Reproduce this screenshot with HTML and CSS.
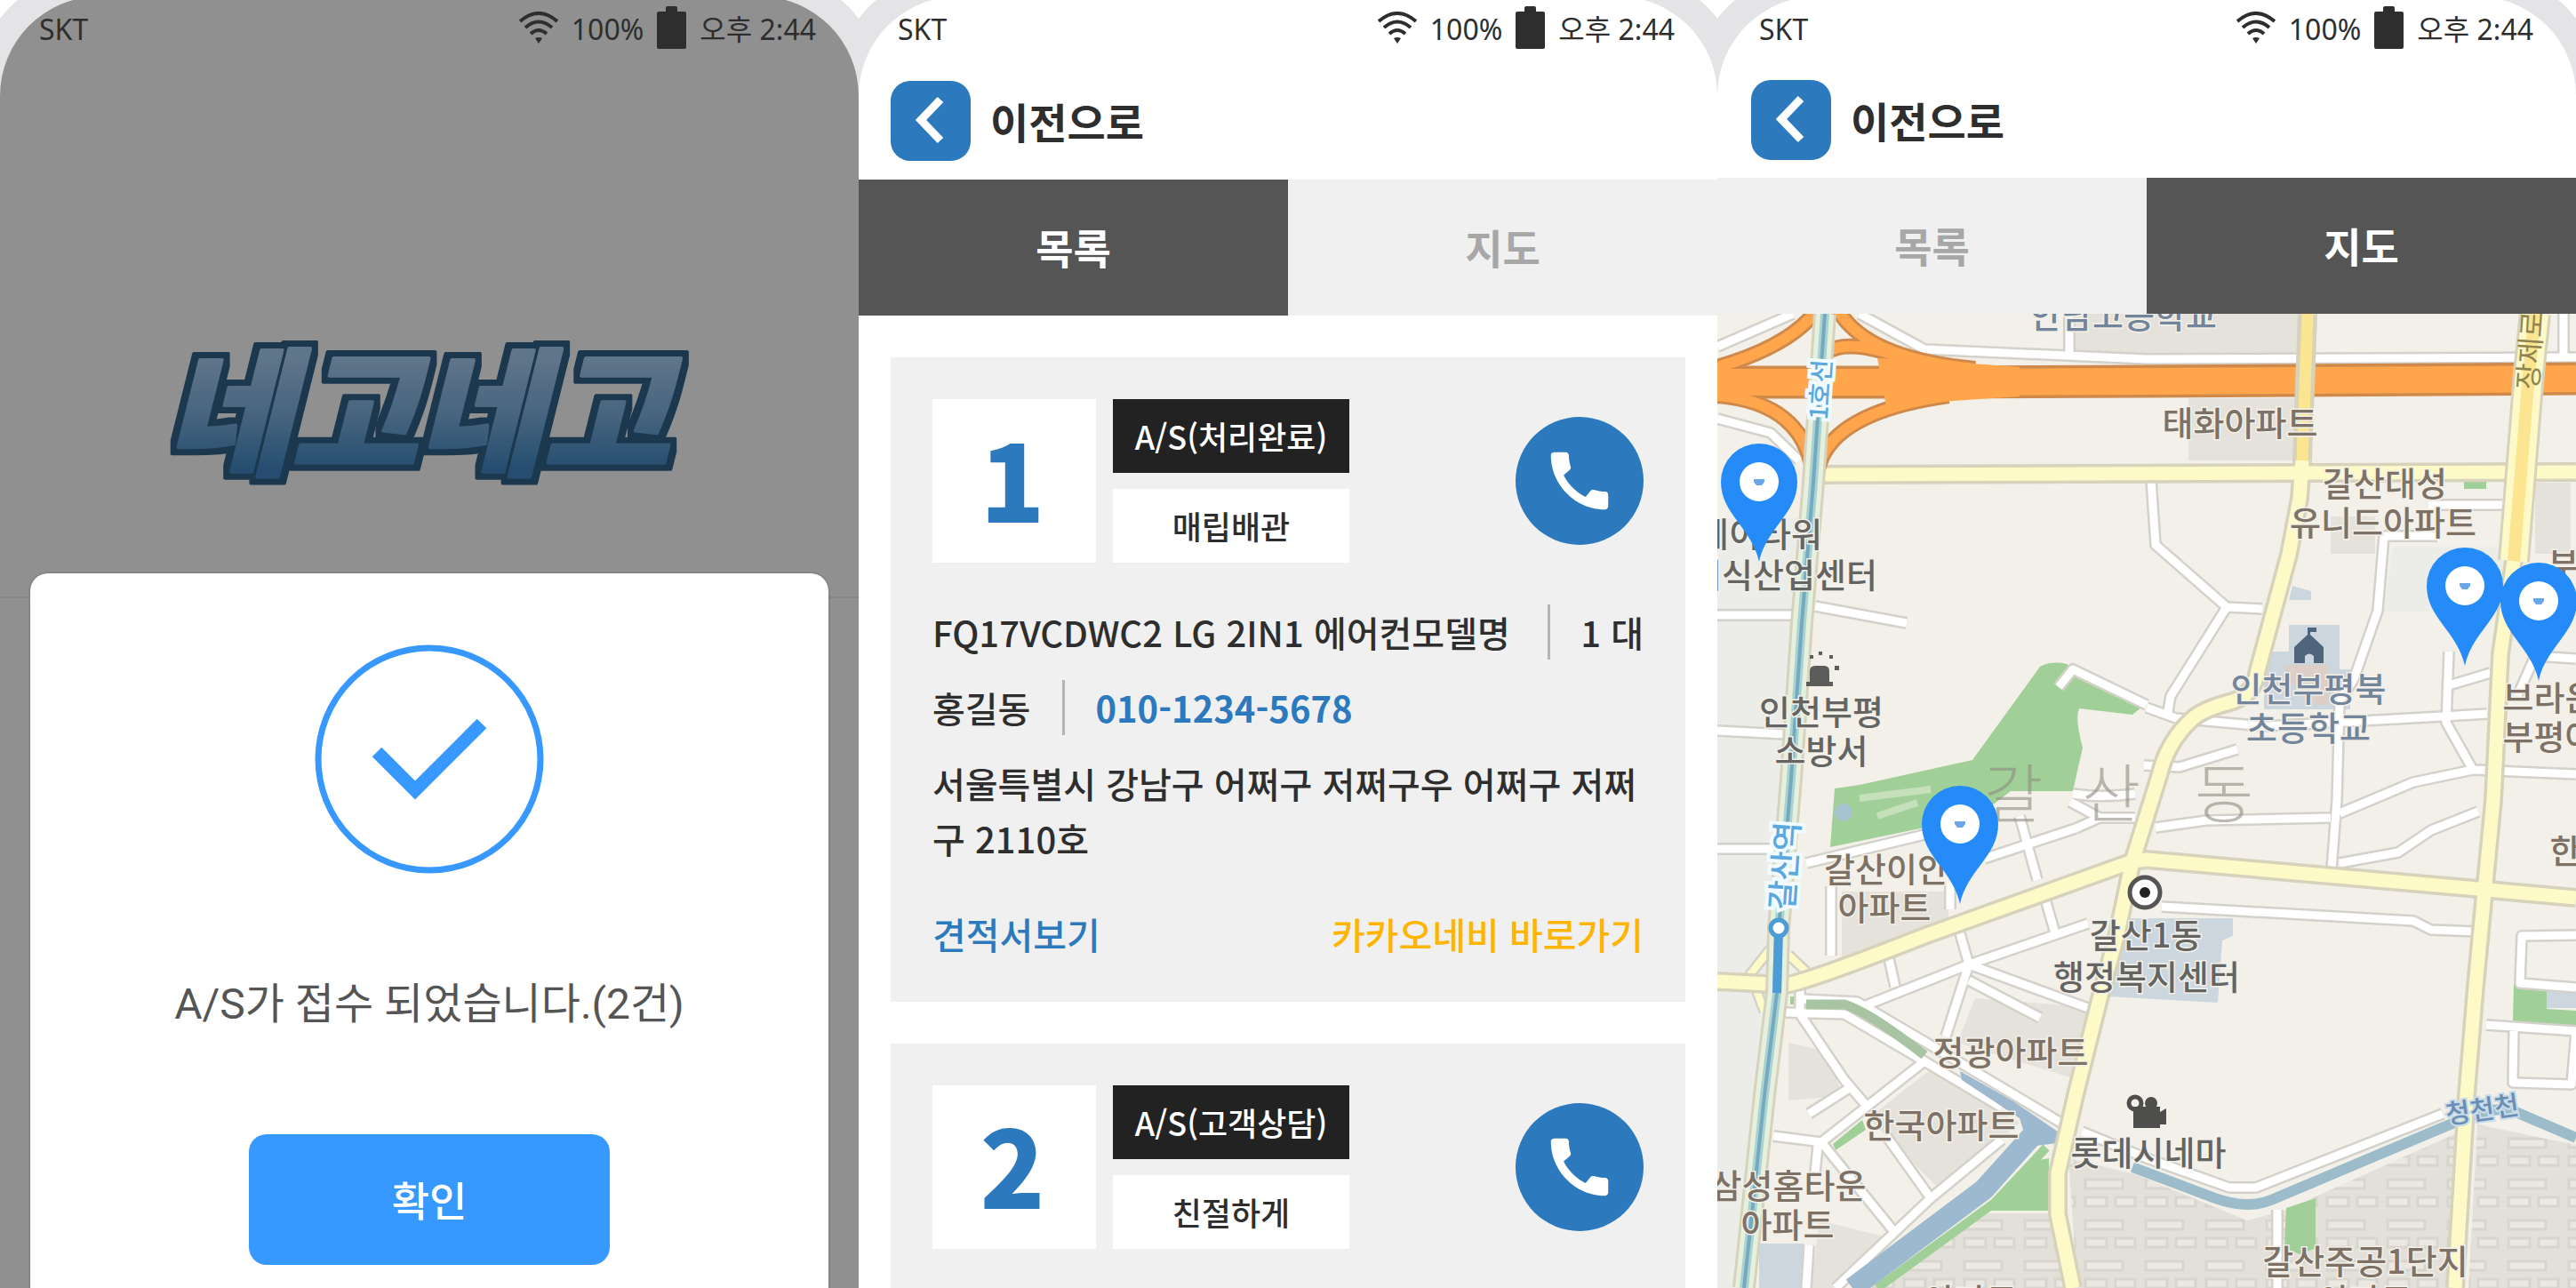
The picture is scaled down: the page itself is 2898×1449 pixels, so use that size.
FILE: index.html
```html
<!DOCTYPE html>
<html lang="ko">
<head>
  <meta charset="UTF-8">
  <meta name="viewport" content="width=device-width, initial-scale=1.0">
  <title>네고네고</title>
  <link rel="stylesheet" href="styles.css">
</head>
<body>

<!-- shared icons -->
<svg class="defs" width="0" height="0" aria-hidden="true">
  <symbol id="wifi" viewBox="0 0 44 36">
    <g fill="none" stroke="currentColor" stroke-width="4">
      <path d="M1 11Q22 -7 43 11"/>
      <path d="M7 18Q22 5 37 18"/>
      <path d="M13 25Q22 17 31 25"/>
    </g>
    <path d="M18 30q4-2 8 0l-4 6z" fill="currentColor"/>
  </symbol>
  <symbol id="battery" viewBox="0 0 33 48">
    <path d="M12 0h9q2 0 2 2v4h8q2 0 2 2v38q0 2-2 2H2q-2 0-2-2V8q0-2 2-2h8V2q0-2 2-2z" fill="currentColor"/>
  </symbol>
  <symbol id="back" viewBox="0 0 90 90">
    <path d="M56 21L34 44L56 67" fill="none" stroke="#fff" stroke-width="9"/>
  </symbol>
  <symbol id="call" viewBox="0 0 24 24">
    <path fill="#fff" d="M20.01 15.38c-1.23 0-2.42-.2-3.53-.56-.35-.12-.74-.03-1.01.24l-1.57 1.97c-2.83-1.35-5.48-3.9-6.89-6.83l1.95-1.66c.27-.28.35-.67.24-1.02-.37-1.11-.56-2.3-.56-3.53 0-.54-.45-.99-.99-.99H4.19C3.65 3 3 3.24 3 3.99 3 13.28 10.73 21 20.01 21c.71 0 .99-.63.99-1.18v-3.45c0-.54-.45-.99-.99-.99z"/>
  </symbol>
</svg>

<main class="phones">

  <!-- 접수 완료 -->
  <section class="phone">
    <div class="screen dim">
      <div class="status">
        <span>SKT</span>
        <div class="status-right">
          <svg class="wifi"><use href="#wifi"/></svg>
          <span>100%</span>
          <svg class="battery"><use href="#battery"/></svg>
          <span>오후 2:44</span>
        </div>
      </div>
      <div class="splash">
        <svg class="logo" viewBox="0 0 640 200" role="img" aria-label="네고네고">
          <defs>
            <linearGradient id="logo-fill" gradientUnits="userSpaceOnUse" x1="0" y1="25" x2="0" y2="175">
              <stop offset="0.1" stop-color="#5f7489"/>
              <stop offset="0.5" stop-color="#47657f"/>
              <stop offset="0.9" stop-color="#264e70"/>
            </linearGradient>
            <filter id="logo-edge" x="-5%" y="-15%" width="110%" height="130%">
              <feMorphology in="SourceAlpha" operator="dilate" radius="7" result="edge"/>
              <feFlood flood-color="#1f3850"/>
              <feComposite in2="edge" operator="in"/>
              <feMerge><feMergeNode/><feMergeNode in="SourceGraphic"/></feMerge>
            </filter>
          </defs>
          <text x="306" y="156" text-anchor="middle" filter="url(#logo-edge)">네고네고</text>
        </svg>
      </div>
      <div class="modal" role="dialog" aria-labelledby="done-msg">
        <svg class="check" viewBox="0 0 258 258" aria-hidden="true">
          <circle cx="129" cy="129" r="125"/>
          <path d="M70 121L113 164L188 89"/>
        </svg>
        <p id="done-msg">A/S가 접수 되었습니다.(2건)</p>
        <button type="button" class="confirm">확인</button>
      </div>
    </div>
  </section>

  <!-- 목록 -->
  <section class="phone">
    <div class="screen">
      <div class="status">
        <span>SKT</span>
        <div class="status-right">
          <svg class="wifi"><use href="#wifi"/></svg>
          <span>100%</span>
          <svg class="battery"><use href="#battery"/></svg>
          <span>오후 2:44</span>
        </div>
      </div>
      <header class="header">
        <button type="button" class="back" aria-label="뒤로"><svg><use href="#back"/></svg></button>
        <h1>이전으로</h1>
      </header>
      <nav class="tabs">
        <button type="button" class="tab active">목록</button>
        <button type="button" class="tab">지도</button>
      </nav>
      <div class="list">
        <article class="card">
          <div class="card-top">
            <div class="num">1</div>
            <div class="tags">
              <span class="tag dark">A/S(처리완료)</span>
              <span class="tag">매립배관</span>
            </div>
            <a class="call" href="tel:010-1234-5678" aria-label="전화"><svg><use href="#call"/></svg></a>
          </div>
          <div class="info">
            <div class="row between">
              <span>FQ17VCDWC2 LG 2IN1 에어컨모델명</span>
              <span class="split">1 대</span>
            </div>
            <div class="row">
              <span>홍길동</span>
              <a class="split tel" href="tel:010-1234-5678">010-1234-5678</a>
            </div>
            <p>서울특별시 강남구 어쩌구 저쩌구우 어쩌구 저쩌구 2110호</p>
          </div>
          <div class="links">
            <a class="blue" href="#estimate">견적서보기</a>
            <a class="yellow" href="#navi">카카오네비 바로가기</a>
          </div>
        </article>
        <article class="card">
          <div class="card-top">
            <div class="num">2</div>
            <div class="tags">
              <span class="tag dark">A/S(고객상담)</span>
              <span class="tag">친절하게</span>
            </div>
            <a class="call" href="tel:010-1234-5678" aria-label="전화"><svg><use href="#call"/></svg></a>
          </div>
        </article>
      </div>
    </div>
  </section>

  <!-- 지도 -->
  <section class="phone map-phone">
    <div class="screen">
      <div class="status">
        <span>SKT</span>
        <div class="status-right">
          <svg class="wifi"><use href="#wifi"/></svg>
          <span>100%</span>
          <svg class="battery"><use href="#battery"/></svg>
          <span>오후 2:44</span>
        </div>
      </div>
      <header class="header">
        <button type="button" class="back" aria-label="뒤로"><svg><use href="#back"/></svg></button>
        <h1>이전으로</h1>
      </header>
      <nav class="tabs">
        <button type="button" class="tab">목록</button>
        <button type="button" class="tab active">지도</button>
      </nav>
      <svg class="map" viewBox="0 0 966 1096" role="img" aria-label="갈산동 지도">
        <defs>
          <pattern id="houses" width="68" height="46" patternUnits="userSpaceOnUse">
            <rect width="68" height="46" fill="#e3e0d9"/>
            <path d="M6 8h42v10h-42zM6 28h24v10h-24zM40 28h22v10h-22z" fill="#ebe8e1" stroke="#d8d5ce" stroke-width="3"/>
          </pattern>
          <g id="pin">
            <path d="M0 90C-8 52 -43 36 -43 0A43 43 0 0 1 43 0C43 36 8 52 0 90z" fill="#248bf9"/>
            <circle r="22" fill="#fff"/>
            <path d="M-6 -3h12v3l-3 4h-6l-3-4z" fill="#69a7e8"/>
          </g>

          <g id="streets">
            <path d="M0 37L85 0M160 0L233 40L483 51L966 49M0 118L60 134L92 165"/>
            <path d="M0 339H88M110 329L213 348M0 469L77 473M0 602H72"/>
            <path d="M488 186L493 260L573 330L613 332M573 330L510 430L506 453M483 443L516 455L616 464L816 453L866 450"/>
            <path d="M750 250L743 334L716 411L700 436L697 547L691 625M750 250H810M800 215H883"/>
            <path d="M823 380L820 460L850 513L966 518M850 513L783 527L700 562M823 418L870 404"/>
            <path d="M493 578L550 570L690 567M700 618L766 606L803 581L856 560"/>
            <path d="M500 667L783 683L803 693L856 695M480 508L520 510L585 490"/>
            <path d="M966 699L905 700L903 753L966 758M865 800L966 807M896 807L895 865L961 867L966 807"/>
            <path d="M900 430L920 385L966 388M952 0V50M396 0V50"/>
            <path d="M100 618L233 586M128 644V722M300 613L403 579M340 565L360 637M397 549L430 567H470M430 567L403 579"/>
            <path d="M273 697L283 732L257 813M167 778L283 732L417 686M193 725L200 757M370 662L380 697"/>
            <path d="M283 732L417 781M283 750L363 792M262 640L262 670"/>
            <path d="M93 757V788L143 862L167 890M77 786L143 788L233 841L320 893M97 771L157 774L247 827L400 918"/>
            <path d="M233 841L117 932L63 925M103 900L147 872M117 932L200 1034M190 925L240 995M113 936L110 967"/>
            <path d="M320 929L240 995L133 1096M103 1048L100 1096M410 920L483 950L576 983H606L816 900M630 1008V1096"/>
            <path d="M400 540Q430 545 470 540M384 420L400 400L483 440"/>
          </g>
          <g id="avenues">
            <path d="M115 181L966 178"/>
            <path d="M658 165L655 208L643 271L608 401Q604 428 580 436Q545 445 533 457Q506 482 497 520L467 616L450 697L430 771L403 879L383 967V1013L400 1096"/>
            <path d="M0 751L77 755Q100 752 233 700L467 616L483 614L866 648L966 657"/>
            <path d="M896 278L881 383L873 547L863 651L853 757L843 879L830 1096"/>
          </g>
          <g id="ramps">
            <path d="M0 60Q85 35 113 -6M135 -6Q165 50 290 62M122 44Q150 24 230 58"/>
            <path d="M0 92Q98 100 108 182M112 182Q120 112 260 92"/>
          </g>
          <path id="rail" d="M121 0L108 190L95 348L83 523L69 692L67 764L53 879L30 1096"/>
        </defs>

        <rect width="966" height="1096" fill="#f3f0e9"/>
        <path d="M0 230H105L85 380L72 545L60 760L40 950L25 1096H0z" fill="#ecede8"/>

        <!-- blocks -->
        <path d="M395 950L470 968L596 1020L640 1008L840 918L830 1096H405zM855 912L966 935V1096H845zM300 1012H380L395 1096H170z" fill="url(#houses)"/>
        <path d="M395 0H660V45H395zM530 95H650V165H530zM140 650H260V700L140 730zM80 820L125 830L140 880L80 885zM240 850L340 910L250 985L170 905zM290 770L420 780L400 860L270 820z" fill="#e5e2db"/>
        <path d="M690 228H740V270H690zM920 190H960V270H920zM115 1020L195 1040L130 1096H105z" fill="#e5e2db"/>
        <path d="M760 262H885V335H750z" fill="#ecede8"/>
        <path d="M643 350H700V400H712V445H615V380H643zM450 680H580V700L568 705L563 775L440 768zM47 1046H97V1096H47zM647 306L668 312V322H643z" fill="#ccd6df"/>
        <path d="M638 395H688V440H675L640 410z" fill="#dccfc7"/>

        <!-- parks -->
        <path d="M132 534L160 530L287 502L363 397Q375 390 393 394L477 443L467 451L407 444Q402 455 411 488L400 537H330L300 560L233 578L127 600z" fill="#a0d098"/>
        <path d="M160 545L240 535M180 565L225 550" fill="none" stroke="#c5e0ba" stroke-width="8"/>
        <circle cx="142" cy="561" r="10" fill="#a6c3cf"/>
        <path d="M130 934L163 907L167 918L133 941zM300 1009H373V950L357 953zM640 1006L673 995V1051L655 1058L638 1051zM896 753L933 755V782L966 784V802L895 797zM840 184h25v13h-25zM82 768h10v9h-10z" fill="#a0d098"/>
        <path d="M933 758H966V781H933z" fill="#ccd6df"/>

        <use href="#streets" class="case" stroke-width="14"/>
        <use href="#streets" class="line" stroke-width="9"/>

        <!-- water -->
        <path d="M100 777H143Q170 785 233 834" fill="none" stroke="#a9c4a2" stroke-width="11"/>
        <path d="M370 938L312 1000L180 1096" fill="none" stroke="#a0d098" stroke-width="10"/>
        <path d="M353 926L300 985L152 1096" fill="none" stroke="#9db9cf" stroke-width="24"/>
        <path d="M273 852L333 886L383 920V933L350 937L340 905L275 862z" fill="#9db9cf"/>
        <path d="M467 960L560 995Q596 1008 623 997L836 907Q880 888 903 900L966 927" fill="none" stroke="#9cbccb" stroke-width="12"/>

        <!-- main roads -->
        <path d="M60 714L37 743L53 785M80 721L100 740" class="small-avenue case"/>
        <path d="M60 714L37 743L53 785M80 721L100 740" class="small-avenue pale"/>
        <use href="#avenues" class="avenue-case" stroke-width="22"/>
        <use href="#avenues" class="pale" stroke-width="15"/>
        <use href="#ramps" fill="none" stroke="#cf8a4b" stroke-width="18"/>
        <path d="M0 77H230L483 76L966 73" fill="none" stroke="#cf8a4b" stroke-width="37"/>
        <path d="M180 50Q250 53 340 60V93Q260 98 190 104z" fill="#ffa54c"/>
        <use href="#ramps" fill="none" stroke="#ffa54c" stroke-width="12"/>
        <path d="M0 77H230L483 76L966 73" fill="none" stroke="#ffa54c" stroke-width="30"/>
        <path d="M664 0L658 165" class="avenue-case" stroke-width="22"/>
        <path d="M664 0L658 165" fill="none" stroke="#fbe590" stroke-width="13"/>
        <path d="M920 0L913 67L896 278" class="avenue-case" stroke-width="36"/>
        <path d="M920 0L913 67L896 278" class="pale" stroke-width="30"/>
        <path d="M920 0L913 67L896 278" fill="none" stroke="#fbe590" stroke-width="14"/>

        <!-- line 1 -->
        <use href="#rail" fill="none" stroke="#d6d3bc" stroke-width="26"/>
        <use href="#rail" fill="none" stroke="#e6f0dc" stroke-width="20"/>
        <use href="#rail" fill="none" stroke="#a9d3d3" stroke-width="10"/>
        <use href="#rail" fill="none" stroke="#74a9be" stroke-width="4"/>
        <path d="M69 692L67 764" stroke="#4d9cd6" stroke-width="10"/>
        <circle cx="69" cy="691" r="9" fill="#fff" stroke="#4d9cd6" stroke-width="5"/>

        <!-- place marks -->
        <path d="M104 414v-12q0-6 6-6h10q6 0 6 6v12h4v5h-30v-5zM104 384h4v4h-4zM114 380h4v4h-4zM126 384h4v4h-4zM132 396h5v5h-5z" fill="#5c5c5a"/>
        <path d="M649 393v-18l15-14v-8h10v5h-7v3l15 14v18h-11v-8q-5-5-10 0v8z" fill="#4f657b"/>
        <circle cx="481" cy="651" r="17" fill="#fff" stroke="#555" stroke-width="5"/>
        <circle cx="481" cy="651" r="6" fill="#222"/>
        <path d="M468 892h30v6l7-4v18h-7v4h-30z" fill="#4e4e4c"/>
        <circle cx="470" cy="888" r="7" fill="none" stroke="#4e4e4c" stroke-width="5"/>
        <circle cx="488" cy="888" r="7" fill="#4e4e4c"/>

        <!-- labels -->
        <g class="district">
          <text x="333" y="566">갈</text>
          <text x="443" y="566">산</text>
          <text x="570" y="566">동</text>
        </g>
        <g class="label school">
          <text x="457" y="16">안남고등학교</text>
          <text x="665" y="436">인천부평북</text>
          <text x="665" y="480">초등학교</text>
        </g>
        <g class="label home">
          <text x="588" y="137">태화아파트</text>
          <text x="751" y="205">갈산대성</text>
          <text x="749" y="249">유니드아파트</text>
          <text x="190" y="639">갈산이안</text>
          <text x="188" y="682">아파트</text>
          <text x="330" y="845">정광아파트</text>
          <text x="252" y="927">한국아파트</text>
          <text x="80" y="995">삼성홈타운</text>
          <text x="79" y="1039">아파트</text>
          <text x="729" y="1080">갈산주공1단지</text>
          <text x="729" y="1124">아파트</text>
          <text x="285" y="1124">아파트</text>
          <text x="952" y="296">부</text>
          <text x="936" y="446">브라운</text>
          <text x="936" y="490">부평아</text>
          <text x="954" y="618">한</text>
        </g>
        <g class="label office">
          <text x="48" y="262">제이타워</text>
          <text x="75" y="308">지식산업센터</text>
          <text x="117" y="462">인천부평</text>
          <text x="117" y="506">소방서</text>
          <text x="482" y="713">갈산1동</text>
          <text x="483" y="760">행정복지센터</text>
          <text x="485" y="958">롯데시네마</text>
        </g>
        <text class="metro" transform="translate(89 622) rotate(-86)">갈산역</text>
        <text class="metro small" transform="translate(126 86) rotate(-86)">1호선</text>
        <text class="river" transform="translate(862 906) rotate(-8)">청천천</text>
        <text class="street" transform="translate(926 42) rotate(-86)">장제로</text>

        <use href="#pin" x="47" y="189"/>
        <use href="#pin" x="841" y="306"/>
        <use href="#pin" x="924" y="323"/>
        <use href="#pin" x="273" y="574"/>
      </svg>
    </div>
  </section>

</main>

</body>
</html>
```
FILE: styles.css
```css
:root {
  --blue: #2c7abd;
  --bright: #3798ff;
  --text: #2e2e2e;
  --card: #f0f0f0;
  --bezel: #e4e4e7;
}
* { margin: 0; padding: 0; box-sizing: border-box; }
body {
  background: #fff;
  color: var(--text);
  font-family: 'Noto Sans CJK KR', sans-serif;
}
button { border: none; font-family: inherit; cursor: pointer; }
a { color: inherit; text-decoration: none; }
svg { display: block; }
.defs { position: absolute; }

.phones { display: grid; grid-template-columns: repeat(3, 1fr); height: 100vh; overflow: hidden; }
.phone { overflow: hidden; display: flex; flex-direction: column; }
.screen {
  flex: 1 0 auto;
  margin-top: -4px;
  padding-top: 4px;
  background: #fff;
  border-radius: 112px 112px 0 0;
  box-shadow: 0 0 0 30px var(--bezel);
  overflow: hidden;
}
.screen.dim { background: #909090; }

/* status bar */
.status {
  display: flex;
  justify-content: space-between;
  align-items: center;
  height: 61px;
  padding: 0 48px 0 44px;
  font-family: 'Noto Sans', 'Noto Sans CJK KR', sans-serif;
  font-size: 32px;
  line-height: 57px;
}
.status span { padding-top: 4px; }
.status-right { display: flex; align-items: center; gap: 15px; }
.wifi { width: 44px; height: 36px; }
.battery { width: 33px; height: 48px; }

/* header */
.header { display: flex; align-items: center; gap: 22px; padding: 30px 36px 21px; }
.header h1 { font-size: 47px; line-height: 68px; font-weight: 700; }
.back { width: 90px; height: 90px; border-radius: 22px; background: var(--blue); }
.back svg { width: 90px; height: 90px; }
.map-phone .status { padding-left: 47px; }
.map-phone .header { padding: 29px 38px 20px; }

.tabs { display: grid; grid-template-columns: 1fr 1fr; }
.tab {
  height: 153px;
  padding-bottom: 4px;
  background: var(--card);
  color: #a7a7a7;
  font-size: 46px;
  font-weight: 700;
}
.tab.active { background: #555; color: #fff; }

/* list */
.list { display: flex; flex-direction: column; gap: 47px; padding: 47px 36px; }
.card { background: var(--card); padding: 47px; display: flex; flex-direction: column; gap: 47px; }
.card-top { display: flex; align-items: center; gap: 19px; }
.num {
  width: 184px;
  height: 184px;
  padding-right: 4px;
  background: #fff;
  color: var(--blue);
  font-size: 120px;
  font-weight: 900;
  line-height: 174px;
  text-align: center;
}
.tags { display: flex; flex-direction: column; gap: 18px; width: 266px; }
.tag { background: #fff; font-size: 36px; font-weight: 500; line-height: 83px; text-align: center; }
.tag.dark { background: #222; color: #fff; }
.call {
  display: flex;
  align-items: center;
  justify-content: center;
  width: 144px;
  height: 144px;
  margin-left: auto;
  border-radius: 50%;
  background: var(--blue);
}
.call svg { width: 86px; height: 86px; }

.info { display: flex; flex-direction: column; gap: 23px; font-size: 40px; font-weight: 500; line-height: 62px; }
.row { display: flex; gap: 36px; }
.row.between { justify-content: space-between; }
.split { border-left: 3px solid #b4b4b4; padding-left: 34px; }
.tel { color: var(--blue); font-weight: 700; }
.links { display: flex; justify-content: space-between; font-size: 41px; font-weight: 500; line-height: 59px; }
.blue { color: var(--blue); }
.yellow { color: #ffb400; }

/* splash + modal */
.splash {
  display: flex;
  align-items: flex-end;
  justify-content: center;
  height: 612px;
  padding-bottom: 105px;
  border-bottom: 2px solid #868686;
}
.logo { width: 640px; height: 200px; overflow: visible; }
.logo text {
  font-size: 154px;
  font-weight: 900;
  font-style: italic;
  fill: url(#logo-fill);
  stroke: url(#logo-fill);
  stroke-width: 4px;
  stroke-linejoin: round;
}
.modal {
  position: relative;
  display: flex;
  flex-direction: column;
  align-items: center;
  margin: -28px 34px 0;
  padding: 80px 0;
  min-height: 900px;
  border-radius: 20px;
  background: #fff;
  box-shadow: 0 0 3px rgba(0, 0, 0, 0.3);
}
.check { width: 258px; height: 258px; fill: none; stroke: var(--bright); stroke-width: 7px; }
.check path { stroke-width: 15px; }
.modal p {
  margin: 113px 0;
  color: #555;
  font-family: Roboto, 'Noto Sans CJK KR', sans-serif;
  font-size: 48px;
  line-height: 67px;
}
.confirm {
  width: 406px;
  height: 147px;
  padding-bottom: 4px;
  border-radius: 20px;
  background: var(--bright);
  color: #fff;
  font-size: 46px;
  font-weight: 500;
}

/* map */
.map { width: 100%; height: auto; }
.case, .avenue-case, .line, .pale { fill: none; stroke-linejoin: round; }
.case { stroke: #d3d1ca; }
.line { stroke: #fff; }
.avenue-case { stroke: #d6d2bc; }
.pale { stroke: #fefac8; }
.small-avenue.case { stroke-width: 13px; }
.small-avenue.pale { stroke-width: 8px; }
.label { font-size: 38px; font-weight: 500; text-anchor: middle; stroke: #f3f0e9; stroke-width: 3px; paint-order: stroke; }
.home { fill: #7d7265; }
.office { fill: #646462; }
.school { fill: #72859a; }
.district { font-size: 72px; font-weight: 300; text-anchor: middle; fill: #8f8c80; opacity: 0.6; }
.metro { font-size: 36px; font-weight: 500; text-anchor: middle; fill: #5aa8de; stroke: #f0faff; stroke-width: 8px; paint-order: stroke; }
.metro.small { font-size: 28px; }
.river { font-size: 30px; font-weight: 500; text-anchor: middle; fill: #6a8db4; stroke: #c7dbe8; stroke-width: 4px; paint-order: stroke; }
.street { font-size: 32px; text-anchor: middle; fill: #8e8551; }
```
